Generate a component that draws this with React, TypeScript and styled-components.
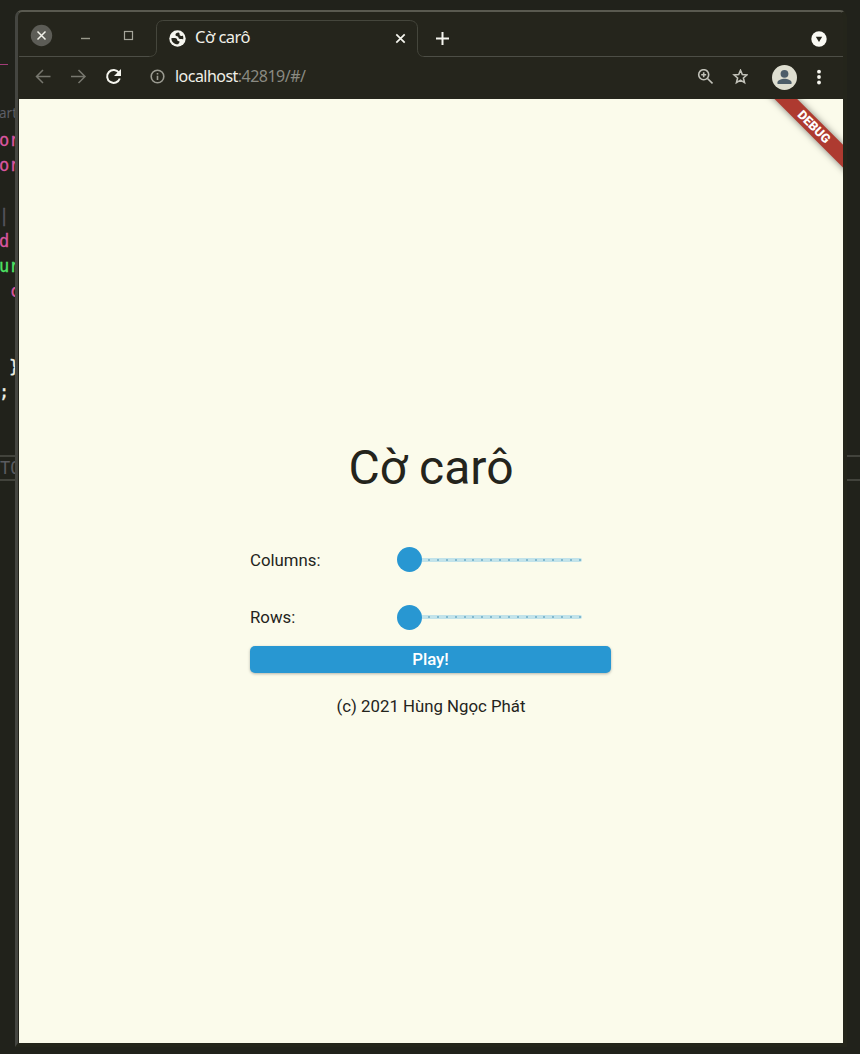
import React from "react";
import styled, { createGlobalStyle } from "styled-components";

const Global = createGlobalStyle`
  * { box-sizing: border-box; }
  body { margin: 0; background: #22231b; }
`;

const Desktop = styled.div`
  position: relative;
  width: 860px;
  height: 1054px;
  overflow: hidden;
  background: #21221b;
`;

const Editor = styled.div`
  width: 860px;
  height: 1054px;
  padding-top: 64px;
  font-family: "Noto Sans", "DejaVu Sans", sans-serif;
`;

const EditorTabMark = styled.div`
  width: 8px;
  height: 38px;
  border-top: 1px solid #a23c78;
`;

const CodeLine = styled.div<{ $color: string; $indent?: number; $small?: boolean }>`
  height: 25.2px;
  line-height: ${(p) => (p.$small ? 23 : 26.4)}px;
  padding-left: ${(p) => p.$indent ?? 0}px;
  color: ${(p) => p.$color};
  font-family: ${(p) => (p.$small ? '"Noto Sans", sans-serif' : '"DejaVu Sans Mono", monospace')};
  font-size: ${(p) => (p.$small ? 13.5 : 17)}px;
  -webkit-text-stroke: ${(p) => (p.$small ? 0 : 0.3)}px;
  text-indent: -1px;
  white-space: pre;
`;

const PanelHeader = styled.div`
  height: 26px;
  margin-top: 51px;
  border: solid #42433c;
  border-width: 2px 0;
  color: #5a5b60;
  font: 17px/22px "DejaVu Sans Mono", monospace;
`;

const Window = styled.div`
  position: absolute;
  left: 15px;
  top: 10px;
  width: 832px;
  height: 1037px;
  display: flex;
  flex-direction: column;
  border: solid #24251b;
  border-width: 2px 4px 4px 4px;
  border-top-color: #5a5a50;
  border-left: 3px solid #454641;
  border-radius: 7px 7px 0 0;
  background: #25251c;
  padding-left: 1px;
`;

const TabStrip = styled.div`
  display: flex;
  height: 45px;
  flex: none;
`;

const WindowButtons = styled.div`
  width: 130px;
  display: flex;
  border-bottom: 1px solid #4d4e46;
  svg { display: block; }
`;

const Tab = styled.div`
  position: relative;
  width: 275px;
  height: 45px;
  display: flex;
  align-items: center;
  padding: 8px 0 0 20px;
  color: #f0f0e8;
  svg { flex: none; }
`;

const TabTitle = styled.span`
  width: 200px;
  margin: -3px 0 0 9px;
  font: 16.5px/20px "Noto Sans", sans-serif;
  letter-spacing: -0.5px;
`;

const TabOutline = styled.svg`
  position: absolute;
  left: 0;
  top: 0;
`;

const StripRest = styled.div`
  flex: 1;
  display: flex;
  align-items: center;
  justify-content: space-between;
  border-bottom: 1px solid #4d4e46;
  padding: 9px 16px 0 11px;
`;

const Toolbar = styled.div`
  display: flex;
  align-items: center;
  flex: none;
  height: 42px;
  padding: 0 15px 2px 15px;
  svg { flex: none; }
`;

const Nav = styled.div`
  display: flex;
  align-items: center;
  gap: 15px;
  width: 115px;
`;

const Address = styled.div`
  flex: 1;
  display: flex;
  align-items: center;
  gap: 9px;
  color: #8a8a82;
  font: 16px/20px "Noto Sans", sans-serif;
  letter-spacing: -0.53px;
  span { margin-top: -2px; }
  b { font-weight: 400; color: #f0f0e8; }
`;

const Actions = styled.div`
  display: flex;
  align-items: center;
`;

const Gap = styled.i<{ $w: number }>`
  width: ${(p) => p.$w}px;
`;

const Page = styled.main`
  position: relative;
  overflow: hidden;
  width: 824px;
  height: 944px;
  flex: none;
  display: flex;
  flex-direction: column;
  align-items: center;
  padding-top: 335px;
  background: #fbfbeb;
  color: #24241c;
  font-family: Roboto, sans-serif;
`;

const Banner = styled.div`
  position: absolute;
  left: 725px;
  top: 20px;
  width: 140px;
  height: 15.5px;
  transform: rotate(45deg);
  background: #ae3a30;
  box-shadow: 0 0 7px rgba(0, 0, 0, 0.5);
  color: #fff;
  text-align: center;
  font: 900 12.6px/15.5px Roboto, sans-serif;
`;

const Title = styled.h1`
  margin: 0;
  height: 97px;
  font-size: 48px;
  line-height: 67px;
  font-weight: 400;
`;

const Form = styled.div`
  width: 361px;
  margin-left: -1px;
`;

const Field = styled.div`
  display: flex;
  align-items: center;
  height: 57.5px;
  font-size: 16.8px;
`;

const Label = styled.label`
  width: 147px;
`;

const Slider = styled.div`
  display: flex;
  align-items: center;
`;

const Thumb = styled.div`
  width: 25px;
  height: 25px;
  border-radius: 50%;
  background: #2897d2;
`;

const Track = styled.div`
  display: flex;
  align-items: center;
  justify-content: space-between;
  width: 160px;
  height: 4px;
  padding: 0 1px 0 6px;
  background: #c2e3ea;
  border-radius: 0 2px 2px 0;
`;

const Tick = styled.i`
  width: 2px;
  height: 2px;
  border-radius: 1px;
  background: #6cabc4;
`;

const Play = styled.button`
  display: block;
  width: 361px;
  height: 27px;
  padding: 0;
  border: 0;
  border-radius: 5px;
  background: #2897d2;
  box-shadow: 0 1px 3px rgba(0, 0, 0, 0.28);
  color: #fff;
  font: 500 16.8px/27px Roboto, sans-serif;
`;

const Copyright = styled.p`
  margin: 23px 0 0;
  font-size: 16.8px;
  line-height: 20px;
`;

const code = [
  { t: "art", c: "#5d5e66", small: true },
  { t: "or", c: "#d9569f" },
  { t: "or", c: "#d9569f" },
  { t: "", c: "#fff" },
  { t: "| U", c: "#55565f", i: -1 },
  { t: "d", c: "#d9569f" },
  { t: "ur", c: "#4ee565" },
  { t: "c", c: "#d9569f", i: 11 },
  { t: "", c: "#fff" },
  { t: "", c: "#fff" },
  { t: "}", c: "#f0f0e6", i: 10 },
  { t: ";", c: "#f0f0e6" },
];

function SliderField({ label }: { label: string }) {
  return (
    <Field>
      <Label>{label}</Label>
      <Slider>
        <Thumb />
        <Track>
          {Array.from({ length: 18 }, (_, i) => (
            <Tick key={i} />
          ))}
        </Track>
      </Slider>
    </Field>
  );
}

export default function App() {
  return (
    <>
      <Global />
      <Desktop>
        <Editor>
          <EditorTabMark />
          {code.map((l, i) => (
            <CodeLine key={i} $color={l.c} $indent={Math.max(0, l.i ?? 0)} $small={l.small}>
              {l.t}
            </CodeLine>
          ))}
          <PanelHeader>TO</PanelHeader>
        </Editor>
        <Window>
          <TabStrip>
            <WindowButtons>
              <svg width="130" height="44" fill="none">
                <circle cx="22.5" cy="23.5" r="10.7" fill="#5c5c56" />
                <path d="M18.5 19.5l8 8m0-8l-8 8" stroke="#f2f2ea" strokeWidth="1.5" />
                <path d="M62 26.5h9" stroke="#99998b" strokeWidth="1.4" />
                <rect x="105.5" y="19.5" width="8" height="8" stroke="#a5a59a" strokeWidth="1.2" />
              </svg>
            </WindowButtons>
            <Tab>
              <TabOutline width="275" height="45" fill="none">
                <path
                  d="M0 44.5C5 44.5 7.5 42 7.5 37V16C7.5 11 10 8.5 15 8.5H260C265 8.5 268.5 11 268.5 16V37C268.5 42 271 44.5 275 44.5"
                  stroke="#45463c"
                />
              </TabOutline>
              <svg width="17" height="17" viewBox="0 0 17 17">
                <circle cx="8.500" cy="8.500" r="8.2" fill="#f6f6ef" />
                <path
                  d="M9.600 2.400C7.600 2.500 6.300 3.500 6.500 4.900c.1 1.100 1.500 1 2.300 1.500.9.600.5 1.800 1.400 2.300 1.200.6 2.800-.1 3.900.700.4-1.500.3-2.800-.3-4-.8.600-2 .800-2.800.1-.7-.7-.2-1.400-.6-2.200-.2-.4-.5-.7-.8-.9z"
                  fill="#25251c"
                />
                <path
                  d="M2.300 8.300c1.800-.3 3.800-.5 5.100.3 1 .6.500 1.600 1.200 2.100.7.500 1.700.2 1.900 1.100.2.900-.7 1.400-1.400 2.500-3.700.4-6.600-2.300-6.800-6z"
                  fill="#25251c"
                />
              </svg>
              <TabTitle>Cờ carô</TabTitle>
              <svg width="11" height="11" fill="none" stroke="#f6f6ef" strokeWidth="1.7">
                <path d="M1.300 1.300l8.400 8.400m0-8.400l-8.400 8.400" />
              </svg>
            </Tab>
            <StripRest>
              <svg width="15" height="15" stroke="#f6f6ef" strokeWidth="2">
                <path d="M1 7.500h13M7.500 1v13" />
              </svg>
              <svg width="16" height="16">
                <circle cx="8" cy="8" r="7.700" fill="#fafaf4" />
                <path d="M4.800 5.800h6.400L8 11z" fill="#25251c" />
              </svg>
            </StripRest>
          </TabStrip>
          <Toolbar>
            <Nav>
              <svg width="20" height="18" fill="none" stroke="#77776e" strokeWidth="1.500">
                <path d="M16.500 8.500H3M9 2L2.500 8.500 9 15" />
              </svg>
              <svg width="20" height="18" fill="none" stroke="#77776e" strokeWidth="1.500">
                <path d="M2 8.500h13.500M9.500 2L16 8.500 9.500 15" />
              </svg>
              <svg width="20" height="20" viewBox="0.500 0.500 20 20" fill="none">
                <path d="M15.500 6.200A6.500 6.500 0 1 0 16.300 12" stroke="#f6f6ef" strokeWidth="2" />
                <path d="M17.500 2.500v7h-7z" fill="#f6f6ef" />
              </svg>
            </Nav>
            <Address>
              <svg width="17" height="17" fill="none" stroke="#9b9b91" strokeWidth="1.600">
                <circle cx="8.500" cy="7.500" r="6.300" />
                <path d="M8.500 6.700v4.300M8.500 4v1.600" />
              </svg>
              <span>
                <b>localhost</b>:42819/#/
              </span>
            </Address>
            <Actions>
              <svg width="17" height="17" fill="none" stroke="#c2c2b9" strokeWidth="1.600">
                <circle cx="7.700" cy="5.700" r="5" />
                <path d="M11.500 9.500l5 5M5.200 5.700h5M7.700 3.200v5" />
              </svg>
              <Gap $w={18} />
              <svg width="17" height="17" fill="none" stroke="#c2c2b9" strokeWidth="1.600">
                <path d="M9.500 1.300l1.800 4.300 4.600.4-3.500 3 1.100 4.600-4-2.500-4 2.500 1.100-4.600-3.500-3 4.600-.4z" />
              </svg>
              <Gap $w={23} />
              <svg width="26" height="26">
                <circle cx="13.500" cy="13.500" r="12.500" fill="#deded0" />
                <circle cx="13.500" cy="9.800" r="3.900" fill="#4d5d69" />
                <path d="M6.500 20v-1.700c0-2.300 4.500-3.500 7-3.500s7 1.200 7 3.500V20z" fill="#4d5d69" />
              </svg>
              <Gap $w={19} />
              <svg width="6" height="17" fill="#f6f6ef">
                <circle cx="3" cy="2.700" r="1.900" />
                <circle cx="3" cy="8" r="1.900" />
                <circle cx="3" cy="13.500" r="1.900" />
              </svg>
              <Gap $w={6} />
            </Actions>
          </Toolbar>
          <Page>
            <Banner>DEBUG</Banner>
            <Title>Cờ carô</Title>
            <Form>
              <SliderField label="Columns:" />
              <SliderField label="Rows:" />
              <Play>Play!</Play>
            </Form>
            <Copyright>(c) 2021 Hùng Ngọc Phát</Copyright>
          </Page>
        </Window>
      </Desktop>
    </>
  );
}
